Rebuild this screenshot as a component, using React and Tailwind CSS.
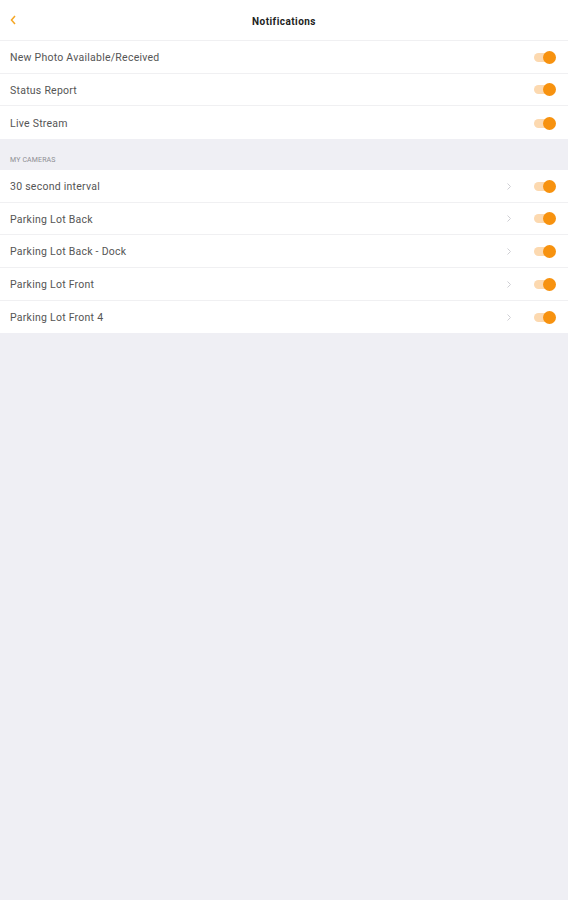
import React from 'react';

const general = ['New Photo Available/Received', 'Status Report', 'Live Stream'];
const cameras = [
  '30 second interval',
  'Parking Lot Back',
  'Parking Lot Back - Dock',
  'Parking Lot Front',
  'Parking Lot Front 4',
];

const Toggle = () => (
  <span className="relative flex items-center w-[22px] h-[14px]">
    <span className="w-[20px] h-[9px] rounded-full bg-[#fcd9b0]" />
    <span className="absolute right-[0.5px] top-[0.5px] w-[13px] h-[13px] rounded-full bg-[#f7920f]" />
  </span>
);

const Row = ({ label, chevron, last }) => (
  <div
    className={`flex items-center h-[32.67px] pl-[10px] pr-[12px] pt-[1px] ${
      last ? '' : 'border-b border-[#f0f0f2]'
    }`}
  >
    <span className="flex-1 pt-[1px] text-[10.5px] tracking-[0.25px] text-[#555]">{label}</span>
    {chevron && (
      <svg width="6" height="9" viewBox="0 0 6 9" className="mr-[22px]">
        <path d="M1.5 1.5l3 3-3 3" fill="none" stroke="#cfcfd4" strokeWidth="1" />
      </svg>
    )}
    <Toggle />
  </div>
);

export default function App() {
  return (
    <div
      className="min-h-[900px] bg-[#efeff4]"
      style={{ fontFamily: 'Roboto, "Liberation Sans", sans-serif' }}
    >
      <div className="relative flex items-center justify-center h-[41px] pt-[2px] bg-white border-b border-[#f0f0f2]">
        <svg width="6" height="10" viewBox="0 0 6 10" className="absolute left-[10px] top-[15px]">
          <path d="M5 1L1.5 5 5 9" fill="none" stroke="#f5a623" strokeWidth="1.5" />
        </svg>
        <span className="text-[10px] font-bold tracking-[0.45px] text-[#222]">Notifications</span>
      </div>
      <div className="bg-white">
        {general.map((g, i) => (
          <Row key={g} label={g} last={i === general.length - 1} />
        ))}
      </div>
      <div className="h-[31px] flex items-end pl-[10px] pb-[4px]">
        <span className="text-[7px] uppercase text-[#8e8e93] tracking-[0.02em]">My Cameras</span>
      </div>
      <div className="bg-white">
        {cameras.map((c, i) => (
          <Row key={c} label={c} chevron last={i === cameras.length - 1} />
        ))}
      </div>
    </div>
  );
}
